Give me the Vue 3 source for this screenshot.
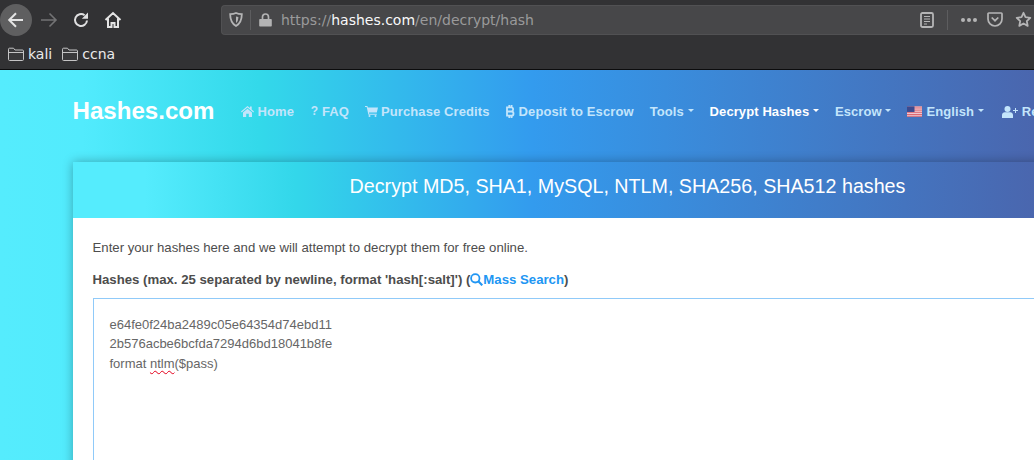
<script setup>
const links = [
  { key: 'home', label: 'Home' },
  { key: 'faq', label: 'FAQ' },
  { key: 'cart', label: 'Purchase Credits' },
  { key: 'btc', label: 'Deposit to Escrow' },
  { key: '', label: 'Tools', caret: true },
  { key: '', label: 'Decrypt Hashes', caret: true, active: true },
  { key: '', label: 'Escrow', caret: true },
  { key: 'flag', label: 'English', caret: true },
  { key: 'user', label: 'Register' }
]
</script>

<template>
  <div class="page">
    <header class="chrome">
      <div class="toolbar">
        <button class="back" aria-label="Back">
          <svg width="20" height="20" viewBox="0 0 20 20"><path d="M17 10H3.500M10 3.200 3.200 10l6.800 6.800" fill="none" stroke="#e4e4e4" stroke-width="2"/></svg>
        </button>
        <svg class="tb fwd" width="20" height="20" viewBox="0 0 20 20"><path d="M2 10h15M10.500 3.500 17 10l-6.500 6.500" fill="none" stroke="#737374" stroke-width="1.600"/></svg>
        <svg class="tb reload" width="18" height="18" viewBox="0 0 18 18"><path d="M15 9.500A6 6 0 1 1 12.600 4.200" fill="none" stroke="#e0e0e1" stroke-width="2"/><path d="M16 1.500v6.200h-6.200z" fill="#e0e0e1"/></svg>
        <svg class="tb home" width="18" height="18" viewBox="0 0 18 18"><path d="M1.500 9 9 2l7.500 7M4 7.500V16h3.500v-4h3v4H14V7.500" fill="none" stroke="#e4e4e4" stroke-width="2"/></svg>
        <div class="urlbar">
          <svg class="shield" width="14" height="15" viewBox="0 0 14 15"><path d="M7 1c2 1 4 1.200 5.800 1.200 0 5-1 9-5.800 11.800C2.200 11.200 1.200 7.200 1.200 2.200 3 2.200 5 2 7 1z" fill="none" stroke="#b5b5b6" stroke-width="1.800"/><path d="M7 4.500c.8.300 1.500.4 2.400.4C9.300 7.500 8.800 9.500 7 11z" fill="#b5b5b6"/></svg>
          <span class="sep"></span>
          <svg class="lock" width="13" height="14" viewBox="0 0 13 14"><path d="M1 6h11a.8.800 0 0 1 .8.800v6a.8.800 0 0 1-.8.800H1a.8.800 0 0 1-.8-.8v-6A.8.800 0 0 1 1 6z" fill="#b3b3b4"/><path d="M3.500 6.500V4a3 3 0 0 1 6 0v2.500" fill="none" stroke="#b3b3b4" stroke-width="1.700"/></svg>
          <span class="url"><span class="dim">https://</span>hashes.com<span class="dim">/en/decrypt/hash</span></span>
          <svg class="reader" width="14" height="16" viewBox="0 0 14 16"><rect x="1" y="1" width="12" height="14" rx="1.500" fill="none" stroke="#b5b5b6" stroke-width="1.800"/><path d="M4 4.500h6M4 7h6M4 9.500h6M4 12h3" stroke="#b5b5b6" stroke-width="1"/></svg>
          <span class="sep sep2"></span>
          <span class="dots"><i></i><i></i><i></i></span>
          <svg class="pocket" width="16" height="15" viewBox="0 0 16 15"><path d="M1.800 1h12.400a.8.800 0 0 1 .8.800V7A7 7 0 0 1 1 7V1.800A.8.800 0 0 1 1.800 1z" fill="none" stroke="#b5b5b6" stroke-width="1.700"/><path d="M4.700 5.500 8 8.700l3.300-3.200" fill="none" stroke="#b5b5b6" stroke-width="1.700"/></svg>
          <svg class="star" width="17" height="17" viewBox="0 0 17 17"><path d="m8.500 1.800 2 4.400 4.800.6-3.500 3.300.9 4.800-4.200-2.400-4.200 2.400.9-4.800L1.700 6.800l4.800-.6z" fill="none" stroke="#b5b5b6" stroke-width="1.800" stroke-linejoin="round"/></svg>
        </div>
      </div>
      <div class="bookmarks">
        <span class="bm" v-for="name in ['kali', 'ccna']" :key="name">
          <svg width="16" height="14" viewBox="0 0 16 14"><path d="M.5 12.500V2.200c0-.6.400-1 1-1h4l1.500 1.800h7.500c.6 0 1 .4 1 1v8.500c0 .6-.4 1-1 1h-13c-.6 0-1-.4-1-1z" fill="#39393b" stroke="#c4c4c5"/><path d="M.5 5.500h15" stroke="#c4c4c5"/></svg>
          {{ name }}
        </span>
      </div>
    </header>

    <main class="site">
      <nav class="nav">
        <a class="brand">Hashes.com</a>
        <ul class="menu">
          <li v-for="l in links" :key="l.label" :class="{ active: l.active, reg: l.key === 'user' }">
            <svg v-if="l.key === 'home'" width="13" height="11" viewBox="0 0 13 11"><path d="M6.500 0 0 5.600l.7.800L6.500 1.500l5.800 4.900.7-.8-2.300-2V.6H9v1.300zM2 6.500 6.500 2.700 11 6.500V11H7.800V7.800H5.200V11H2z" fill="currentColor"/></svg>
            <span v-else-if="l.key === 'faq'" class="q">?</span>
            <svg v-else-if="l.key === 'cart'" width="13" height="11" viewBox="0 0 13 11"><path d="M0 0h2.400l.4 1.500H13l-1.200 5H3.900l.3 1.200h7.600v1H3.400L1.700 1H0z" fill="currentColor"/><circle cx="4.500" cy="10" r="1" fill="currentColor"/><circle cx="10.500" cy="10" r="1" fill="currentColor"/></svg>
            <svg v-else-if="l.key === 'btc'" class="btc" width="9" height="13" viewBox="0 0 9 13"><path d="M1 2.300h4.200c2.500 0 2.500 3.900.2 4.200 2.800.2 2.800 4.200 0 4.200H1zM1.500 6.500h4M3.300 0v2.300M5.600 0v2.300M3.300 10.700V13M5.600 10.700V13" fill="none" stroke="currentColor" stroke-width="1.800"/></svg>
            <svg v-else-if="l.key === 'flag'" class="flag" width="15" height="11" viewBox="0 0 16 11"><rect width="16" height="11" fill="#f4e8ee"/><path d="M0 .8h16M0 2.800h16M0 4.800h16M0 6.800h16M0 8.800h16M0 10.500h16" stroke="#d9505c"/><rect width="8" height="6" fill="#3c4a8f"/></svg>
            <svg v-else-if="l.key === 'user'" class="user" width="16" height="12" viewBox="0 0 16 12"><circle cx="5.500" cy="3" r="3" fill="currentColor"/><path d="M0 12V9c0-1.600 1.300-2.800 2.800-2.800h5.400C9.700 6.200 11 7.400 11 9v3zM11 4h2V2h1v2h2v1h-2v2h-1V5h-2z" fill="currentColor"/></svg>
            {{ l.label }}<span v-if="l.caret" class="caret"></span>
          </li>
        </ul>
      </nav>

      <section class="card">
        <h1 class="card-head">Decrypt MD5, SHA1, MySQL, NTLM, SHA256, SHA512 hashes</h1>
        <div class="card-body">
          <p class="intro">Enter your hashes here and we will attempt to decrypt them for free online.</p>
          <p class="label">Hashes (max. 25 separated by newline, format 'hash[:salt]') (<svg class="mag" width="13" height="13" viewBox="0 0 13 13"><circle cx="5.300" cy="5.300" r="4.200" fill="none" stroke="#2196f3" stroke-width="1.800"/><path d="m8.300 8.300 4 4" stroke="#2196f3" stroke-width="2.200"/></svg><a>Mass Search</a>)</p>
          <div class="textarea">
            <div>e64fe0f24ba2489c05e64354d74ebd11</div>
            <div>2b576acbe6bcfda7294d6bd18041b8fe</div>
            <div>format <span class="spell">ntlm</span>($pass)</div>
          </div>
        </div>
      </section>
    </main>
  </div>
</template>

<style>
html, body { margin: 0; overflow: hidden; }
</style>

<style scoped>
.page { width: 1034px; height: 460px; overflow: hidden; display: flex; flex-direction: column; font-family: "Liberation Sans", Arial, sans-serif; }
.chrome { height: 70px; flex: none; box-sizing: border-box; background: #323234; border-bottom: 1px solid #0c0c0d; font-family: "DejaVu Sans", sans-serif; }
.toolbar { height: 40px; display: flex; align-items: center; position: relative; }
.back { width: 32px; height: 32px; margin: 0; border: 0; padding: 0; border-radius: 50%; background: #5f5f60; display: flex; align-items: center; justify-content: center; flex: none; }
.back svg { margin-left: -1px; }
.tb { flex: none; }
.fwd { margin-left: 7px; }
.reload { margin-left: 13px; }
.home { margin-left: 14px; }
.urlbar { margin-left: 99px; flex: 1; height: 30px; box-sizing: border-box; border: 1px solid #515153; border-right: 0; border-radius: 4px 0 0 4px; background: #474749; display: flex; align-items: center; padding-left: 7px; margin-top: -1px; min-width: 0; }
.sep { width: 1px; height: 20px; background: #5d5d5f; margin: 0 8px 0 7px; flex: none; }
.url { font-size: 14px; color: #f9f9fa; margin-left: 9px; flex: 1; white-space: nowrap; }
.dim { color: #9a9a9b; }
.sep2 { margin: 0 13px 0 13px; }
.dots { display: flex; gap: 2px; width: 16px; flex: none; }
.dots i { width: 4px; height: 4px; border-radius: 50%; background: #b5b5b6; }
.pocket { margin-left: 10px; flex: none; }
.star { margin-left: 12px; margin-right: 2px; flex: none; }
.reader { margin-right: 0; flex: none; }
.bookmarks { height: 29px; display: flex; align-items: flex-start; padding-left: 8px; gap: 10px; color: #eaeaeb; font-size: 14px; }
.bm { display: flex; align-items: center; gap: 4px; height: 28px; }

.site { flex: 1; min-height: 0; background: linear-gradient(90deg, #55ecfd 0%, #52ebfd 8%, #33d9ea 25%, #339bee 51.500%, #4a66ae 100%); padding: 0 0 0 72.500px; overflow: hidden; }
.nav { height: 92px; display: flex; align-items: flex-start; }
.brand { font-size: 24.100px; font-weight: 700; color: #fff; line-height: 28px; margin-top: 27px; flex: none; }
.menu { list-style: none; margin: 34px 0 0 27px; padding: 0; display: flex; gap: 16px; font-size: 13px; font-weight: 700; line-height: 15px; color: #c3e5fb; white-space: nowrap; }
.menu li { display: flex; align-items: center; gap: 3px; letter-spacing: 0.100px; }
.menu li.active { color: #fff; }
.menu li.reg { margin-left: 2px; }
.q { font-size: 12px; width: 9px; text-align: center; }
.btc { margin-right: 1px; }
.caret { width: 0; height: 0; border: 3px solid transparent; border-top-color: currentColor; border-bottom: 0; margin-left: 0.700px; margin-top: -3px; }
.flag { margin-right: 1px; }
.user { margin-right: 1px; }

.card { width: 1108px; background: #fff; box-shadow: 0 0 10px rgba(0, 0, 0, 0.3); }
.card-head { height: 56px; box-sizing: border-box; padding: 0 0 8px 2px; margin: 0; display: flex; align-items: center; justify-content: center; font-size: 19.700px; font-weight: 400; color: #fff; background: linear-gradient(90deg, #55ecfd 0%, #55ecfd 6.500%, #33d7ea 20%, #339bee 41.500%, #4a66ae 87%); }
.card-body { padding: 21px 20px 0 20px; height: 300px; color: #4d4d4d; }
.intro { margin: 0; font-size: 13.200px; line-height: 18px; }
.label { margin: 14px 0 0; font-size: 13.200px; line-height: 18px; font-weight: 700; display: flex; align-items: center; white-space: pre; }
.label a { color: #2196f3; }
.mag { margin: -2px 0 0 0; }
.textarea { margin-top: 9px; box-sizing: border-box; height: 300px; border: 1px solid #90caf9; padding: 15.700px 16px 16px; font-size: 13px; line-height: 19.500px; color: #666; }
.spell { text-decoration: underline wavy #e3001b 1px; text-underline-offset: 2px; }
</style>
